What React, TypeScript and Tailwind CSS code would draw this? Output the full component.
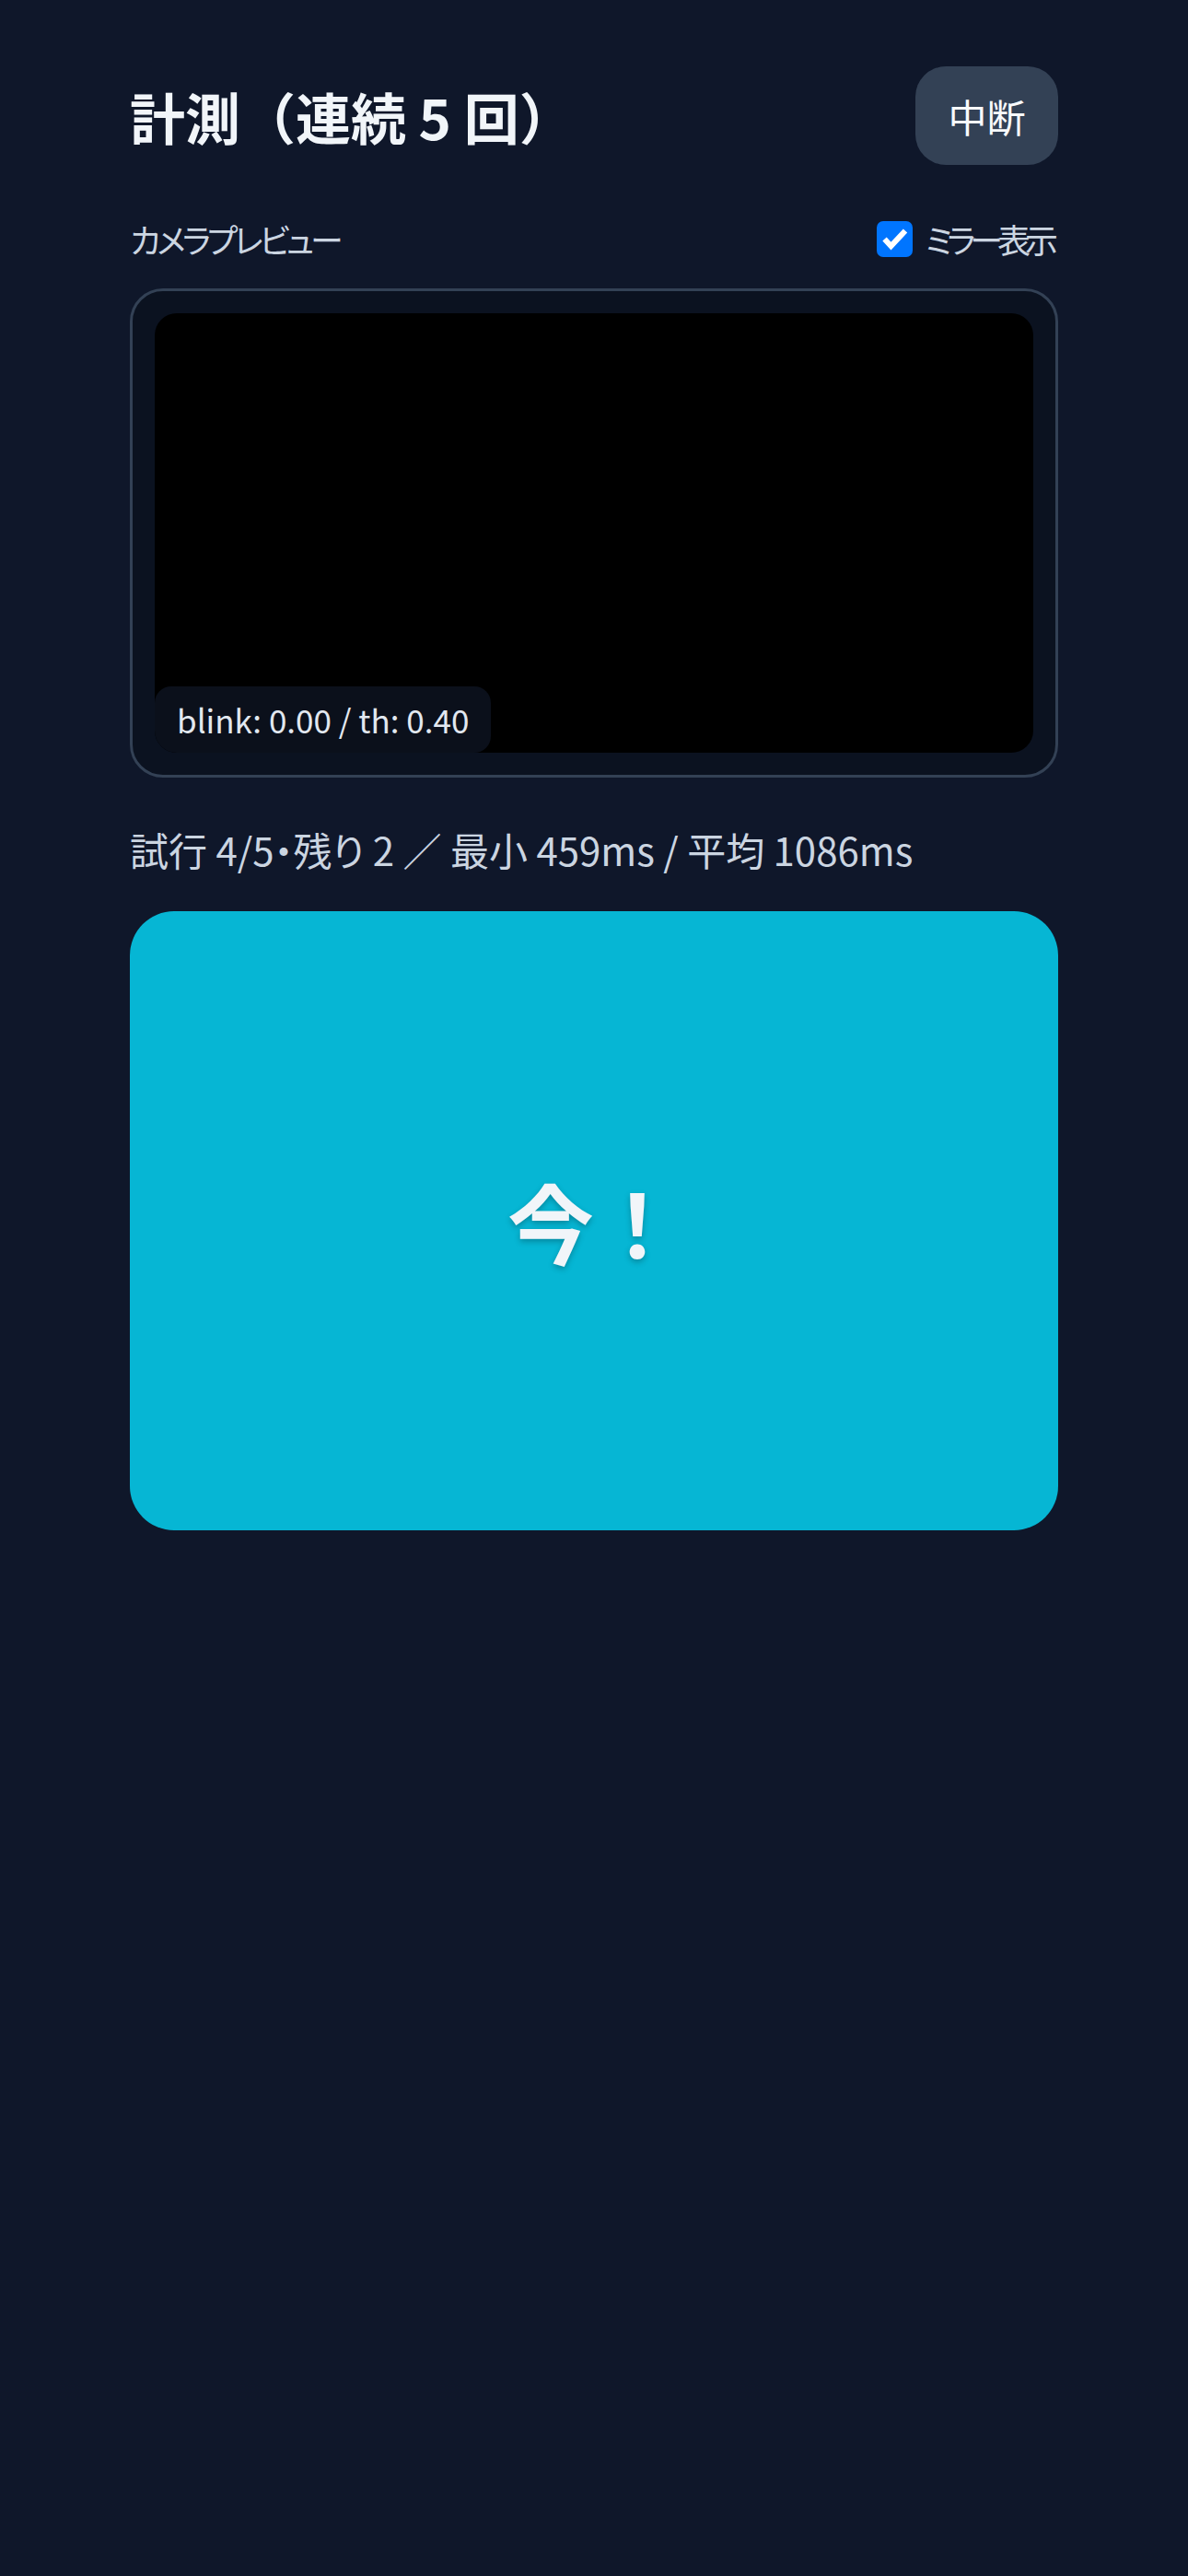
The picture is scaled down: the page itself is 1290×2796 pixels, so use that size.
import React from "react";

const CheckMark = () => (
  <span className="flex h-[39px] w-[39px] shrink-0 items-center justify-center rounded-[7px] bg-[#0075ff]">
    <svg width="39" height="39" viewBox="0 0 39 39" fill="none">
      <path
        d="M8.5 19.5 L15.5 27 L31 10.5"
        stroke="#ffffff"
        strokeWidth="6"
        strokeLinejoin="miter"
      />
    </svg>
  </span>
);

export default function App() {
  return (
    <div className="min-h-[2796px] w-full bg-[#0f172a] font-['Noto_Sans_CJK_JP','Noto_Sans',sans-serif]">
      <div className="px-[141px] pt-[72px]">
        {/* header */}
        <div className="flex h-[107px] items-center justify-between">
          <h1 className="text-[60px] font-bold leading-none text-[#f1f5f9]">
            計測（連続 5 回）
          </h1>
          <button className="flex h-[107px] w-[155px] items-center justify-center rounded-[33px] bg-[#334155] text-[42px] text-[#f8fafc]">
            中断
          </button>
        </div>

        {/* preview label row */}
        <div className="mt-[53px] flex h-[54px] items-center justify-between">
          <span className="text-[36px] tracking-[-4px] text-[#cbd5e1] [font-feature-settings:'palt']">
            カメラプレビュー
          </span>
          <label className="flex items-center gap-[14px] pr-[6px]">
            <CheckMark />
            <span className="text-[36px] tracking-[-6px] text-[#cbd5e1] [font-feature-settings:'palt']">
              ミラー表示
            </span>
          </label>
        </div>

        {/* camera */}
        <div className="mt-[27px] rounded-[36px] border-[3px] border-[#334155] bg-[#0b1220] p-[24px]">
          <div className="relative h-[477px] overflow-hidden rounded-[24px] bg-black">
            <div className="absolute bottom-0 left-0 rounded-[18px] bg-[#0b101b] px-[24px] py-[12px] text-[35px] leading-[48px] text-[#e2e8f0]">
              blink: 0.00 / th: 0.40
            </div>
          </div>
        </div>

        {/* stats */}
        <p className="mt-[48px] text-[42px] leading-[60px] text-[#cbd5e1] [font-feature-settings:'palt']">
          試行 4/5・残り 2 ／ 最小 459ms / 平均 1086ms
        </p>

        {/* tap target */}
        <button className="mt-[37px] flex h-[672px] w-full items-center justify-center rounded-[48px] bg-[#06b6d4] text-[94px] font-semibold text-[#f1f5f9] [text-shadow:0_3px_6px_rgba(0,0,0,0.25)]">
          今！
        </button>
      </div>
    </div>
  );
}
